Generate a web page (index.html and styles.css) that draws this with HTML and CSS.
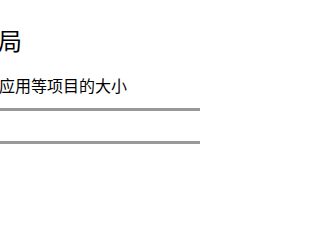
FILE: index.html
```html
<!DOCTYPE html>
<html lang="zh-CN">
<head>
<meta charset="utf-8">
<link rel="stylesheet" href="styles.css">
</head>
<body>
<div class="panel">
  <h2 class="title">缩放与布局</h2>
  <p class="label">更改文本、应用等项目的大小</p>
  <div class="select"></div>
</div>
</body>
</html>
```
FILE: styles.css
```css
html, body {
  margin: 0;
  padding: 0;
  background: #ffffff;
  overflow: hidden;
}
body {
  width: 200px;
  height: 200px;
  font-family: "Noto Sans CJK SC", "Noto Sans", sans-serif;
  color: #000000;
}
.panel {
  display: flex;
  flex-direction: column;
  margin-left: -81px;
  width: 320px;
  padding-top: 22px;
}
.title {
  margin: 0 0 0 -17px;
  font-size: 24px;
  font-weight: 400;
  line-height: 36px;
  white-space: nowrap;
}
.label {
  margin: 15px 0 0 0;
  font-size: 16px;
  font-weight: 400;
  line-height: 24px;
  white-space: nowrap;
}
.select {
  margin-top: 11px;
  height: 30px;
  border: 3px solid #999999;
  box-sizing: content-box;
}
```
